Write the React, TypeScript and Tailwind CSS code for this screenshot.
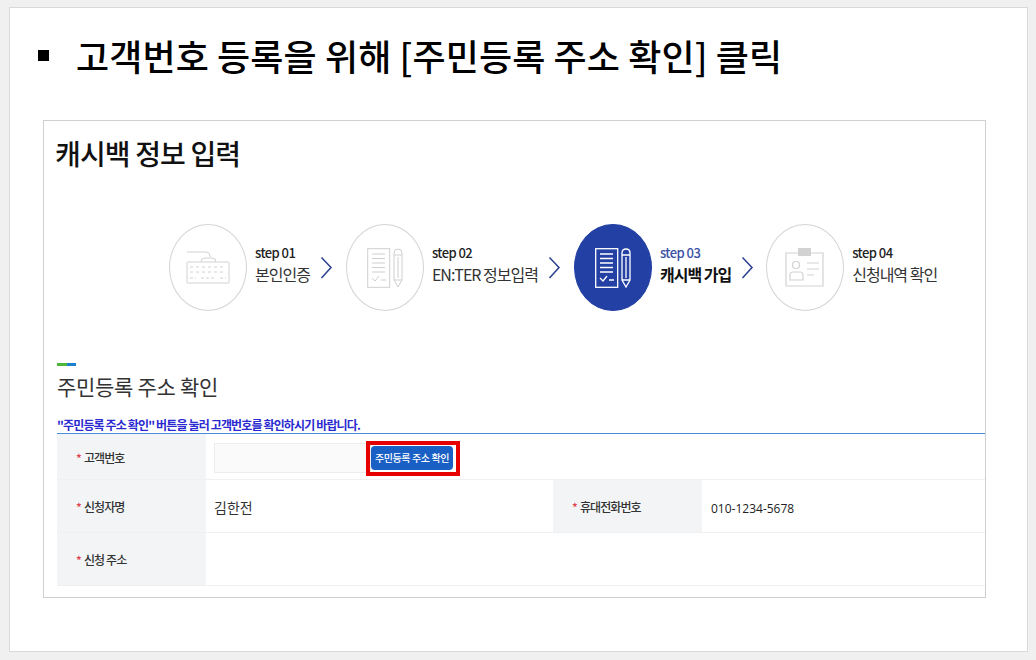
const FONT = "font-['Noto_Sans_CJK_KR','Noto_Sans',sans-serif]";

function Chevron() {
  return (
    <svg width="13" height="24" viewBox="0 0 13 24" className="block shrink-0" fill="none" stroke="#2b3f8f" strokeWidth="1.5">
      <path d="M1.5 1.5 L11 11.5 L1.5 22" />
    </svg>
  );
}

function Keyboard() {
  return (
    <svg width="44" height="33" viewBox="0 0 44 33" fill="none" stroke="#d2d2d2" strokeWidth="1">
      <path d="M1 1 H20 Q24 1 24 5 V6" />
      <path d="M15 11 Q15 7 19 7 H26 Q30 7 30 11" />
      <rect x="1" y="11" width="42" height="21" rx="1" />
      <path d="M4 16 H40 M4 21 H40" strokeDasharray="3 3" />
      <path d="M4 27 H10 M15 27 H29 M34 27 H40" strokeDasharray="3 2" />
    </svg>
  );
}

function DocPencil({ color, sw = 1, w = 36 }: { color: string; sw?: number; w?: number }) {
  return (
    <svg width={w} height="40" viewBox="0 0 36 40" fill="none" stroke={color} strokeWidth={sw}>
      <rect x="0.7" y="0.7" width="22" height="38.6" />
      <path d="M5 6 H18 M5 10.5 H18 M5 15 H18 M5 19.5 H18 M5 24 H18" />
      <path d="M5 30 L8 33 L12 28 M14 32 H19" />
      <path d="M27 5 Q27 1 31 1 Q35 1 35 5 V32 L31 39 L27 32 Z" />
      <path d="M27 7 H35 M27 32 H35" />
      <path d="M31 9 V30" />
    </svg>
  );
}

function IdCard() {
  return (
    <svg width="40" height="39" viewBox="0 0 40 39" fill="none" stroke="#d2d2d2" strokeWidth="1.2">
      <rect x="13" y="0" width="13" height="8" fill="#d2d2d2" stroke="none" />
      <path d="M13 5 H1 V38 H38 V5 H26" />
      <circle cx="11" cy="17" r="3.5" />
      <path d="M5 32 V27 Q5 24 8 24 H15 Q18 24 18 27 V32 Z" />
      <path d="M22 15 H34 M22 21 H34 M22 27 H29" />
    </svg>
  );
}

function Circle({ active, children }: { active?: boolean; children: React.ReactNode }) {
  return (
    <div
      className={
        "flex h-[87px] w-[78px] shrink-0 items-center justify-center rounded-[50%] border " +
        (active ? "border-[#2340a4] bg-[#2340a4]" : "border-[#d4d4d4] bg-white")
      }
    >
      {children}
    </div>
  );
}

function StepText({ step, label, active }: { step: string; label: string; active?: boolean }) {
  return (
    <div className="mb-[7px] ml-[8px] flex flex-col whitespace-nowrap">
      <span className={"text-[13px] leading-[17px] font-medium tracking-[-0.55px] " + (active ? "text-[#3b50a6]" : "text-[#222]")}>
        {step}
      </span>
      <span className={"mt-[2px] text-[16px] leading-[22px] tracking-[-1px] " + (active ? "font-bold text-[#111]" : "text-[#333]")}>
        {label}
      </span>
    </div>
  );
}

function Label({ children }: { children: React.ReactNode }) {
  return (
    <div className="flex w-[149px] shrink-0 items-center self-stretch bg-[#f2f4f6] pt-[2px] pl-[19px] text-[12px] font-medium tracking-[-0.9px] text-[#333]">
      <span className="mr-[3px] text-[#e0404a]">*</span>
      {children}
    </div>
  );
}

export default function App() {
  return (
    <div className={"h-[660px] w-[1036px] overflow-hidden bg-[#f0f0f0] pt-[7px] pl-[9px] " + FONT}>
      <div className="h-[645px] w-[1019px] border border-[#d9d9d9] bg-white">
        <div className="flex h-[112px] items-start pt-[22px] pl-[28px] text-black">
          <span className="mt-[20px] h-[11px] w-[11px] bg-black" />
          <h1 className="ml-[27px] text-[36px] leading-[50px] font-medium tracking-[0.1px] whitespace-nowrap">
            고객번호 등록을 위해 [주민등록 주소 확인] 클릭
          </h1>
        </div>

        <div className="ml-[33px] h-[478px] w-[943px] border border-[#cfcfcf] bg-white">
          <h2 className="pt-[12px] pl-[11px] text-[28px] leading-[40px] font-medium tracking-[-0.85px] text-[#111]">
            캐시백 정보 입력
          </h2>

          <div className="mt-[51px] ml-[125px] flex h-[87px] items-center">
            <Circle><Keyboard /></Circle>
            <StepText step="step 01" label="본인인증" />
            <span className="ml-[10px]"><Chevron /></span>
            <span className="ml-[13px]"><Circle><DocPencil color="#cfcfcf" /></Circle></span>
            <StepText step="step 02" label="EN:TER 정보입력" />
            <span className="ml-[10px]"><Chevron /></span>
            <span className="ml-[13px]"><Circle active><DocPencil color="#ffffff" sw={1.3} /></Circle></span>
            <StepText step="step 03" label="캐시백 가입" active />
            <span className="ml-[10px]"><Chevron /></span>
            <span className="ml-[12px]"><Circle><IdCard /></Circle></span>
            <StepText step="step 04" label="신청내역 확인" />
          </div>

          <div className="mt-[52px] ml-[13px]">
            <div className="flex h-[3px] w-[19px]">
              <span className="w-[10px] bg-[#4fb83c]" />
              <span className="w-[9px] bg-[#1c7fd0]" />
            </div>
            <h3 className="mt-[5px] text-[21px] leading-[30px] tracking-[-0.3px] text-[#333]">주민등록 주소 확인</h3>
            <p className="mt-[15px] text-[12px] leading-[17px] font-bold tracking-[-0.86px] text-[#2a2ad0]">
              "주민등록 주소 확인" 버튼을 눌러 고객번호를 확인하시기 바랍니다.
            </p>

            <div className="h-[1px] bg-[#4a8ad8]" />
            <div className="flex h-[46px] items-center border-b border-[#f0f0f0]">
              <Label>고객번호</Label>
              <div className="mt-[2px] ml-[8px] h-[30px] w-[157px] border border-[#ececec] bg-[#fafafa]" />
              <div className="relative mt-[2px]">
                <button className="flex h-[24px] w-[82px] items-center justify-center rounded-[4px] bg-[#1a5fc4] text-[10px] font-medium tracking-[-0.4px] whitespace-nowrap text-white">
                  주민등록 주소 확인
                </button>
                <span className="absolute -top-[5px] -left-[5px] h-[35px] w-[94px] border-4 border-[#e60000]" />
              </div>
            </div>
            <div className="flex h-[53px] items-center border-b border-[#f0f0f0]">
              <Label>신청자명</Label>
              <div className="w-[347px] pt-[2px] pl-[8px] text-[14px] text-[#333]">김한전</div>
              <Label>휴대전화번호</Label>
              <div className="pt-[5px] pl-[9px] font-['Open_Sans',sans-serif] text-[12px] text-[#222]">010-1234-5678</div>
            </div>
            <div className="flex h-[53px] items-center border-b border-[#f0f0f0]">
              <Label>신청 주소</Label>
            </div>
          </div>
        </div>
      </div>
    </div>
  );
}
